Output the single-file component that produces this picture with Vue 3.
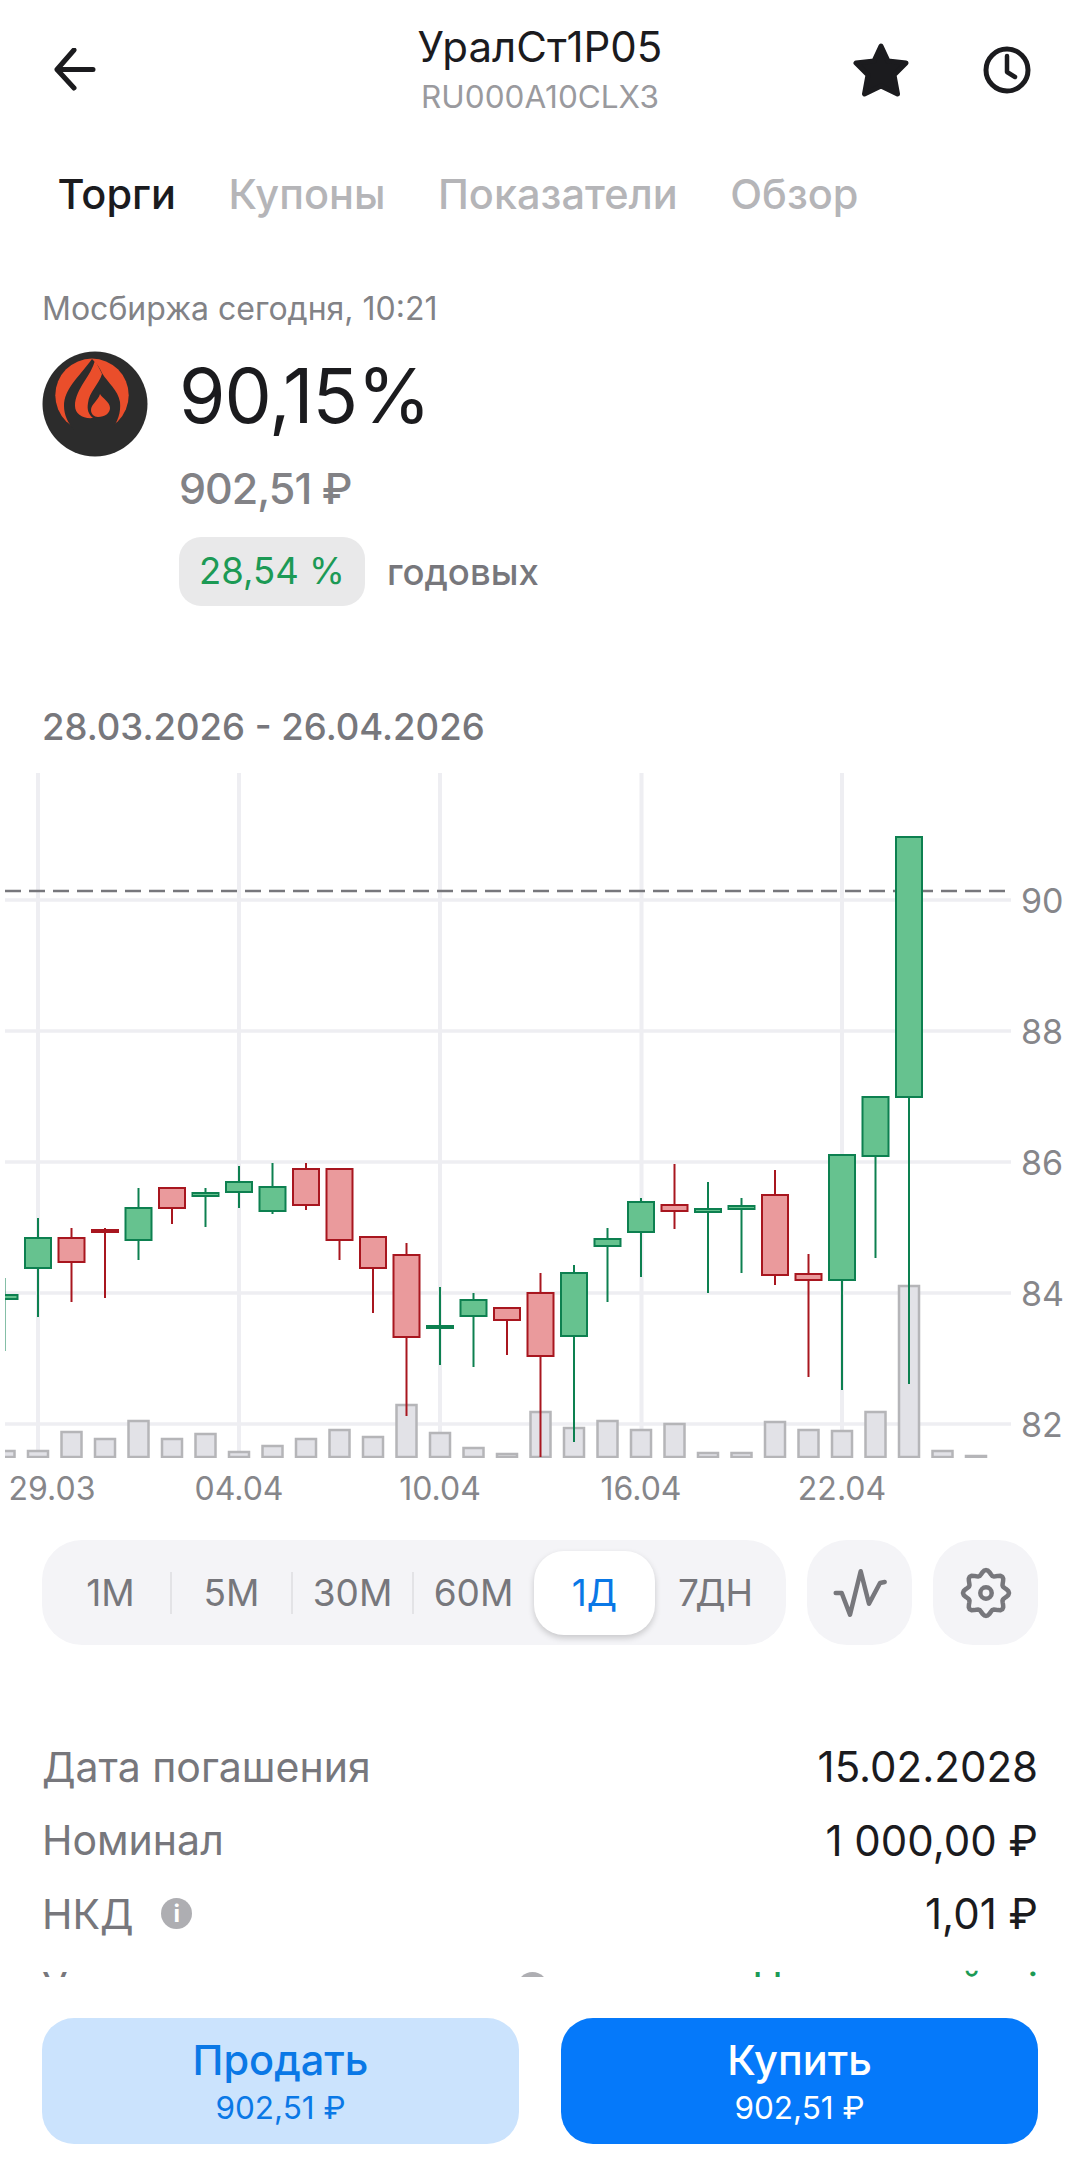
<template>
  <div class="screen">
    <header class="topbar">
      <svg class="back" viewBox="0 0 44 44" width="44" height="44">
        <path d="M40 21.500H4M21 2 4 21.500 21 40" fill="none" stroke="#1b1b1e" stroke-width="5" stroke-linecap="round" stroke-linejoin="round" />
      </svg>
      <div class="title-box">
        <div class="title">УралСт1Р05</div>
        <div class="isin">RU000A10CLX3</div>
      </div>
      <svg class="star" viewBox="0 0 56 54" width="56" height="54">
        <path d="M28 3 35 18 53 20 41 32 44.500 51 28 43 11.500 51 15 32 3 20 21 18Z" fill="#1b1b1e" stroke="#1b1b1e" stroke-width="5" stroke-linejoin="round" />
      </svg>
      <svg class="clock" viewBox="0 0 50 50" width="50" height="50">
        <circle cx="25" cy="25" r="21" fill="none" stroke="#1b1b1e" stroke-width="5" />
        <path d="M25 11V27L33 32" fill="none" stroke="#1b1b1e" stroke-width="4.500" stroke-linecap="round" stroke-linejoin="round" />
      </svg>
    </header>

    <nav class="tabs">
      <span v-for="(tab, i) in tabs" :key="tab" class="tab" :class="{ active: i === 0 }">{{ tab }}</span>
    </nav>

    <section class="quote">
      <div class="market">Мосбиржа сегодня, 10:21</div>
      <div class="price-row">
        <svg class="logo" viewBox="0 0 106 106" width="106" height="106">
          <circle cx="53" cy="53" r="52.500" fill="#2c2c2c" />
          <circle cx="50" cy="44.300" r="36.700" fill="#ea4e2b" />
          <path d="M50 8C36 27 22 38 22 55 22 64 26 72 32 79L32 86 69 86 69 79C76 71 79 61 78 51 76 39 66 32 60 22 58 17 55 13 50 8Z" fill="#2c2c2c" />
          <path d="M53 9C50 24 33 38 33 55 33 63 41 68 51 67 46 63 45 58 46 52 47 41 57 33 60 23 58 18 55 14 53 9Z" fill="#ea4e2b" />
          <path d="M58 43C56 50 49 53 49 59 49 63 52 66 56 66 63 66 68 62 68 57 68 51 60 47 58 43Z" fill="#ea4e2b" />
        </svg>
        <div class="price-main">90,15%</div>
      </div>
      <div class="price-sub">902,51 ₽</div>
      <div class="yield-row">
        <span class="yield-badge">28,54 %</span>
        <span class="yield-label">годовых</span>
      </div>
    </section>

    <div class="range">28.03.2026 - 26.04.2026</div>

    <svg class="chart" viewBox="0 0 1080 781" width="1080" height="781">
      <defs>
        <clipPath id="plot-area">
          <rect x="5" y="0" width="1075" height="699" />
        </clipPath>
      </defs>

      <line v-for="x in gridX" :key="'v' + x" :x1="x" :x2="x" y1="14" y2="698" class="grid-v" />
      <line v-for="l in yLabels" :key="'h' + l.text" x1="5" x2="1011" :y1="l.y" :y2="l.y" class="grid-h" />

      <g clip-path="url(#plot-area)">
        <rect
          v-for="b in volumes"
          :key="'vol' + b.x"
          :x="b.x"
          :y="b.y"
          :width="b.w"
          :height="b.h"
          class="vol"
        />

        <line x1="5" x2="1005" y1="132" y2="132" class="last-price" />

        <g v-for="c in candles" :key="'c' + c.x" :class="c.up ? 'up' : 'down'">
          <line :x1="c.x" :x2="c.x" :y1="c.top" :y2="c.bottom" class="wick" />
          <rect :x="c.bx" :y="c.y" :width="c.w" :height="c.h" class="body" />
        </g>
      </g>

      <text v-for="l in yLabels" :key="'y' + l.text" x="1021" :y="l.y + 13" class="axis">{{ l.text }}</text>
      <text v-for="l in xLabels" :key="'x' + l.text" :x="l.x" y="741" class="axis date" text-anchor="middle">{{ l.text }}</text>
    </svg>

    <div class="controls">
      <div class="periods">
        <template v-for="(p, i) in periods" :key="p">
          <span class="period" :class="{ selected: p === '1Д' }">{{ p }}</span>
          <i v-if="i < 3" class="sep"></i>
        </template>
      </div>
      <button class="square">
        <svg viewBox="0 0 60 60" width="60" height="60">
          <path d="M5.700 30H11.700L20 51.700 30.700 8.300 39 40.700 50 20 54.700 19" fill="none" stroke="#77777c" stroke-width="4.500" stroke-linecap="round" stroke-linejoin="round" />
        </svg>
      </button>
      <button class="square">
        <svg viewBox="0 0 60 60" width="60" height="60">
          <path :d="gearPath" fill="none" stroke="#77777c" stroke-width="4.500" stroke-linejoin="round" />
          <circle cx="30" cy="30" r="5.700" fill="none" stroke="#77777c" stroke-width="4.500" />
        </svg>
      </button>
    </div>

    <div class="rows">
      <div class="row">
        <span class="row-name">Дата погашения</span>
        <span class="row-value">15.02.2028</span>
      </div>
      <div class="row">
        <span class="row-name">Номинал</span>
        <span class="row-value">1 000,00 ₽</span>
      </div>
      <div class="row">
        <span class="row-name">НКД <i class="info">i</i></span>
        <span class="row-value">1,01 ₽</span>
      </div>
      <div class="row">
        <span class="row-name">Уровень ликвидности <i class="info wide">i</i></span>
        <span class="row-value green">Невысокий <b>i</b></span>
      </div>
    </div>

    <div class="actions">
      <button class="action sell">
        <span class="action-name">Продать</span>
        <span class="action-price">902,51 ₽</span>
      </button>
      <button class="action buy">
        <span class="action-name">Купить</span>
        <span class="action-price">902,51 ₽</span>
      </button>
    </div>
  </div>
</template>

<script setup>
import { computed } from 'vue'

const tabs = ['Торги', 'Купоны', 'Показатели', 'Обзор']
const periods = ['1М', '5М', '30М', '60М', '1Д', '7ДН']

const gridX = [38, 239, 440, 641.5, 842]

const yLabels = [
  { text: '90', y: 141 },
  { text: '88', y: 272 },
  { text: '86', y: 403 },
  { text: '84', y: 534 },
  { text: '82', y: 665 }
]

const xLabels = [
  { text: '29.03', x: 52 },
  { text: '04.04', x: 239 },
  { text: '10.04', x: 440 },
  { text: '16.04', x: 641 },
  { text: '22.04', x: 842 }
]

// slot, wick top, body top, body bottom, wick bottom, rising
const rawCandles = [
  [0, 519, 536, 540, 592, true],
  [1, 459, 479, 509, 558, true],
  [2, 469, 479, 503, 543, false],
  [3, 469, 471, 473, 539, false],
  [4, 429, 449, 481, 501, true],
  [5, 429, 429, 449, 465, false],
  [6, 429, 434, 437, 468, true],
  [7, 407, 423, 433, 449, true],
  [8, 404, 428, 452, 455, true],
  [9, 404, 410, 446, 451, false],
  [10, 410, 410, 481, 501, false],
  [11, 478, 478, 509, 554, false],
  [12, 484, 496, 578, 657, false],
  [13, 528, 567, 569, 606, true],
  [14, 534, 541, 557, 608, true],
  [15, 549, 549, 561, 596, false],
  [16, 514, 534, 597, 698, false],
  [17, 506, 514, 577, 683, true],
  [18, 469, 480, 487, 543, true],
  [19, 439, 443, 473, 518, true],
  [20, 405, 446, 452, 470, false],
  [21, 423, 450, 453, 534, true],
  [22, 439, 447, 450, 514, true],
  [23, 411, 436, 516, 526, false],
  [24, 495, 515, 521, 618, false],
  [25, 396, 396, 521, 631, true],
  [26, 338, 338, 397, 499, true],
  [27, 77, 78, 338, 625, true]
]

const volumeTops = [
  692, 692, 673, 680, 662, 680, 675, 693, 687, 680, 671, 678, 646, 674, 689, 695, 653,
  669, 662, 671, 665, 694, 694, 663, 671, 672, 653, 527, 692, 697
]

const slotX = (i) => 4.5 + 33.5 * i

const candles = computed(() =>
  rawCandles.map(([i, top, y, bottom, low, up]) => {
    const x = slotX(i)
    return { x, bx: x - 13, y, w: 26, h: bottom - y, top, bottom: low, up }
  })
)

const volumes = computed(() =>
  volumeTops.map((top, i) => ({ x: slotX(i) - 10, y: top, w: 20, h: 698 - top }))
)

const gearPath = computed(() => {
  const pts = []
  for (let a = 0; a < 360; a += 5) {
    const t = (a * Math.PI) / 180
    const r = 20.5 + 2.5 * Math.cos(8 * t)
    pts.push(`${(30 + r * Math.sin(t)).toFixed(1)} ${(30 - r * Math.cos(t)).toFixed(1)}`)
  }
  return 'M' + pts.join('L') + 'Z'
})
</script>

<style>
html,
body {
  background: #fff;
}
</style>

<style scoped>
.screen {
  width: 1080px;
  height: 2160px;
  overflow: hidden;
  display: flex;
  flex-direction: column;
  background: #fff;
  font-family: Inter, "Noto Sans", sans-serif;
  color: #1b1b1e;
}

.topbar {
  display: flex;
  align-items: center;
  height: 128px;
  padding: 12px 0 0 53px;
  box-sizing: border-box;
}

.back {
  flex: none;
}

.title-box {
  margin-left: 293px;
  margin-top: -2px;
  width: 300px;
  text-align: center;
}

.title {
  font-size: 42px;
  line-height: 50px;
}

.isin {
  font-size: 31.5px;
  line-height: 38px;
  margin-top: 6px;
  color: #9a9a9e;
}

.star {
  margin-left: 163px;
  flex: none;
}

.clock {
  margin-left: 73px;
  flex: none;
}

.tabs {
  display: flex;
  gap: 52.5px;
  padding: 42px 0 0 57.5px;
  height: 90px;
  box-sizing: border-box;
  font-size: 41.5px;
  line-height: 48px;
}

.tab {
  color: #b5b5b8;
  font-weight: 500;
}

.tab.active {
  color: #1b1b1e;
}

.quote {
  padding: 0 42px;
}

.market {
  margin-top: 71px;
  font-size: 32px;
  line-height: 40px;
  color: #828286;
}

.price-row {
  display: flex;
  align-items: center;
  gap: 31px;
  margin-top: 22px;
}

.logo {
  flex: none;
}

.price-main {
  font-size: 75px;
  line-height: 92px;
  margin-top: -16px;
  letter-spacing: -1px;
}

.price-sub {
  margin: 5px 0 0 137px;
  font-size: 43px;
  line-height: 52px;
  font-weight: 500;
  color: #828286;
  letter-spacing: -1px;
}

.yield-row {
  display: flex;
  align-items: center;
  margin: 23px 0 0 137px;
}

.yield-badge {
  width: 186px;
  height: 69px;
  line-height: 69px;
  border-radius: 22px;
  background: #e9e9ea;
  color: #1c9a55;
  font-size: 36.5px;
  text-align: center;
}

.yield-label {
  margin-left: 22px;
  font-size: 36.5px;
  font-weight: 500;
  color: #77777c;
}

.range {
  margin: 99px 0 0 42px;
  font-size: 36.5px;
  line-height: 44px;
  font-weight: 500;
  color: #77777c;
}

.chart {
  margin-top: 10px;
  flex: none;
  display: block;
}

.grid-v {
  stroke: #eeeef2;
  stroke-width: 4;
}

.grid-h {
  stroke: #eeeef2;
  stroke-width: 3.5;
}

.vol {
  fill: #e2e2e7;
  stroke: #b5b5b8;
  stroke-width: 2.5;
}

.last-price {
  stroke: #77777c;
  stroke-width: 2.5;
  stroke-dasharray: 16 8;
}

.up .wick {
  stroke: #0d8050;
  stroke-width: 2;
}

.up .body {
  fill: #66c28f;
  stroke: #0d8050;
  stroke-width: 2;
}

.down .wick {
  stroke: #a8161f;
  stroke-width: 2;
}

.down .body {
  fill: #ea9a9c;
  stroke: #a8161f;
  stroke-width: 2;
}

.axis {
  font-family: Inter, "Noto Sans", sans-serif;
  font-size: 34px;
  fill: #86868a;
}

.axis.date {
  font-size: 32px;
}

.controls {
  display: flex;
  gap: 21px;
  margin-left: 42px;
  flex: none;
}

.periods {
  display: flex;
  align-items: center;
  width: 744px;
  height: 105px;
  padding: 0 8px;
  box-sizing: border-box;
  border-radius: 40px;
  background: #f4f4f7;
}

.period {
  width: 121px;
  height: 84px;
  line-height: 84px;
  text-align: center;
  font-size: 37px;
  color: #77777c;
}

.period.selected {
  background: #fff;
  border-radius: 30px;
  color: #0a78e6;
  box-shadow: 0 3px 6px rgba(0, 0, 0, 0.18);
}

.sep {
  width: 2px;
  height: 42px;
  margin: 0 -1px;
  background: #e3e3e6;
}

.square {
  width: 105px;
  height: 105px;
  padding: 0;
  border: none;
  border-radius: 40px;
  background: #f4f4f7;
  display: flex;
  align-items: center;
  justify-content: center;
}

.rows {
  margin-top: 85px;
  padding: 0 42px;
  height: 247px;
  overflow: hidden;
  flex: none;
}

.row {
  display: flex;
  justify-content: space-between;
  align-items: center;
  height: 73.5px;
  font-size: 41px;
}

.row-name {
  color: #77777c;
  display: flex;
  align-items: center;
  white-space: pre;
}

.row-value {
  color: #1b1b1e;
  font-size: 42px;
}

.row-value.green {
  color: #1c9a55;
}

.row-value b {
  margin-left: 32px;
  font-weight: 400;
}

.info {
  display: inline-block;
  width: 31px;
  height: 31px;
  margin-left: 16px;
  border-radius: 50%;
  background: #aeaeb2;
  color: #fff;
  font: 700 24px/31px Inter, sans-serif;
  text-align: center;
}

.info.wide {
  margin-left: 24px;
}

.actions {
  display: flex;
  justify-content: space-between;
  padding: 41px 42px 0;
}

.action {
  width: 477px;
  height: 126px;
  padding: 0;
  border: none;
  border-radius: 32px;
  font-family: inherit;
  display: flex;
  flex-direction: column;
  align-items: center;
  justify-content: center;
}

.sell {
  background: #cbe3fd;
  color: #0a78e6;
}

.buy {
  background: #0579fa;
  color: #fff;
}

.action-name {
  font-size: 41.5px;
  line-height: 48px;
  font-weight: 500;
}

.action-price {
  font-size: 31.5px;
  line-height: 38px;
  margin-top: 5px;
}
</style>
